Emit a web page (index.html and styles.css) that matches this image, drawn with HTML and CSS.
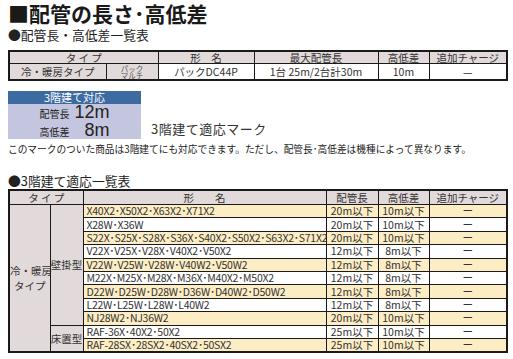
FILE: index.html
```html
<!DOCTYPE html>
<html>
<head>
    <meta charset="utf-8">
    <title>配管の長さ・高低差</title>
    <link rel="stylesheet" href="styles.css">
</head>
<body>

<h1 class="title">■配管の長さ･高低差</h1>
<h2 class="sub">●配管長・高低差一覧表</h2>

<table class="spec spec1">
    <colgroup>
        <col style="width: 97px"><col style="width: 52px"><col style="width: 96px">
        <col style="width: 124px"><col style="width: 51px"><col>
    </colgroup>
    <tr class="head">
        <th colspan="2">タ イ プ</th>
        <th>形　名</th>
        <th>最大配管長</th>
        <th>高低差</th>
        <th>追加チャージ</th>
    </tr>
    <tr class="row1">
        <td class="type">冷・暖房タイプ</td>
        <td class="type tiny">パック<br>マルチ</td>
        <td>パックDC44P</td>
        <td>1台 25m/2台計30m</td>
        <td>10m</td>
        <td>—</td>
    </tr>
</table>

<div class="mark-row">
    <div class="badge">
        <div class="badge-top">3階建て対応</div>
        <div class="badge-body">
            <span class="lbl">配管長</span><span class="num">12m</span>
            <span class="lbl">高低差</span><span class="num">8m</span>
        </div>
    </div>
    <div class="mark-caption">3階建て適応マーク</div>
</div>
<p class="note">このマークのついた商品は3階建てにも対応できます。ただし、配管長･高低差は機種によって異なります。</p>

<h2 class="sub sub2">●3階建て適応一覧表</h2>

<table class="spec spec2">
    <colgroup>
        <col style="width: 41px"><col style="width: 33px"><col style="width: 243px">
        <col style="width: 52px"><col style="width: 51px"><col>
    </colgroup>
    <tr class="head">
        <th colspan="2">タ イ プ</th>
        <th>形　　名</th>
        <th>配管長</th>
        <th>高低差</th>
        <th>追加チャージ</th>
    </tr>
    <tr class="y">
        <td class="type" rowspan="11">冷・暖房<br>タイプ</td>
        <td class="type" rowspan="9">壁掛型</td>
        <td class="model">X40X2･X50X2･X63X2･X71X2</td>
        <td>20m以下</td><td>10m以下</td><td>ー</td>
    </tr>
    <tr>
        <td class="model">X28W･X36W</td>
        <td>20m以下</td><td>10m以下</td><td>ー</td>
    </tr>
    <tr class="y">
        <td class="model">S22X･S25X･S28X･S36X･S40X2･S50X2･S63X2･S71X2</td>
        <td>20m以下</td><td>10m以下</td><td>ー</td>
    </tr>
    <tr>
        <td class="model">V22X･V25X･V28X･V40X2･V50X2</td>
        <td>12m以下</td><td>8m以下</td><td>ー</td>
    </tr>
    <tr class="y">
        <td class="model">V22W･V25W･V28W･V40W2･V50W2</td>
        <td>12m以下</td><td>8m以下</td><td>ー</td>
    </tr>
    <tr>
        <td class="model">M22X･M25X･M28X･M36X･M40X2･M50X2</td>
        <td>12m以下</td><td>8m以下</td><td>ー</td>
    </tr>
    <tr class="y">
        <td class="model">D22W･D25W･D28W･D36W･D40W2･D50W2</td>
        <td>12m以下</td><td>8m以下</td><td>ー</td>
    </tr>
    <tr>
        <td class="model">L22W･L25W･L28W･L40W2</td>
        <td>12m以下</td><td>8m以下</td><td>ー</td>
    </tr>
    <tr class="y">
        <td class="model">NJ28W2･NJ36W2</td>
        <td>20m以下</td><td>10m以下</td><td>ー</td>
    </tr>
    <tr>
        <td class="type" rowspan="2">床置型</td>
        <td class="model">RAF-36X･40X2･50X2</td>
        <td>25m以下</td><td>10m以下</td><td>ー</td>
    </tr>
    <tr class="y">
        <td class="model">RAF-28SX･28SX2･40SX2･50SX2</td>
        <td>25m以下</td><td>10m以下</td><td>ー</td>
    </tr>
</table>

</body>
</html>
```

FILE: styles.css
```css
body {
    margin: 0;
    padding: 0 5px 0 8px;
    background-color: white;
    color: #222;
    font-family: "Noto Sans CJK JP", "Noto Sans", sans-serif;
}

.title {
    margin: 0;
    font-size: 21px;
    line-height: 27px;
    font-weight: bold;
    color: #1a1a1a;
}

.sub {
    margin: 0;
    font-size: 12.8px;
    line-height: 16px;
    font-weight: normal;
    color: #222;
}

.sub2 {
    margin-top: 17px;
}

.spec {
    width: 500px;
    border-collapse: collapse;
    table-layout: fixed;
    border: 2px solid #1a1a1a;
    font-size: 10.5px;
    color: #333;
}

.spec th,
.spec td {
    border: 1px solid #1a1a1a;
    padding: 0;
    text-align: center;
    font-weight: normal;
    white-space: nowrap;
}

.spec1 {
    margin-top: 7px;
}

.spec1 .head th {
    height: 11px;
    line-height: 11px;
    background-color: #e2dada;
}

.spec1 .row1 td {
    height: 15px;
    line-height: 14px;
}

.spec .type {
    background-color: #e2dada;
}

.tiny {
    font-size: 7.5px;
    line-height: 7px !important;
    color: #555;
}

.spec2 .head th {
    height: 13px;
    line-height: 13px;
    background-color: #e2dada;
}

.spec2 td {
    height: 12.4px;
    line-height: 12px;
}

.spec2 tr.y td {
    background-color: #fdedc4;
}

.spec2 tr.y td.type {
    background-color: #e2dada;
}

.spec2 .model {
    text-align: left;
    padding-left: 3px;
    letter-spacing: -0.25px;
}

.spec2 td.type {
    line-height: 15px;
}

.mark-row {
    display: flex;
    align-items: flex-end;
    margin-top: 10px;
}

.badge {
    width: 133px;
}

.badge-top {
    height: 13px;
    line-height: 13px;
    background-color: #3c6ba2;
    color: white;
    font-size: 11px;
    text-align: center;
}

.badge-body {
    height: 35px;
    background-color: #c3c6de;
    display: grid;
    grid-template-columns: auto 36px;
    justify-content: center;
    align-content: center;
    align-items: baseline;
    column-gap: 4px;
    color: #222;
}

.lbl {
    font-size: 10px;
    line-height: 16px;
}

.num {
    font-size: 18px;
    line-height: 16px;
    text-align: right;
    font-family: "Liberation Sans", "Noto Sans", sans-serif;
}

.mark-caption {
    margin-left: 10px;
    margin-bottom: 1px;
    font-size: 13px;
    letter-spacing: 0.5px;
    color: #333;
}

.note {
    margin: 3px 0 0 0;
    font-size: 9.7px;
    line-height: 14px;
    color: #1a1a1a;
}
```
